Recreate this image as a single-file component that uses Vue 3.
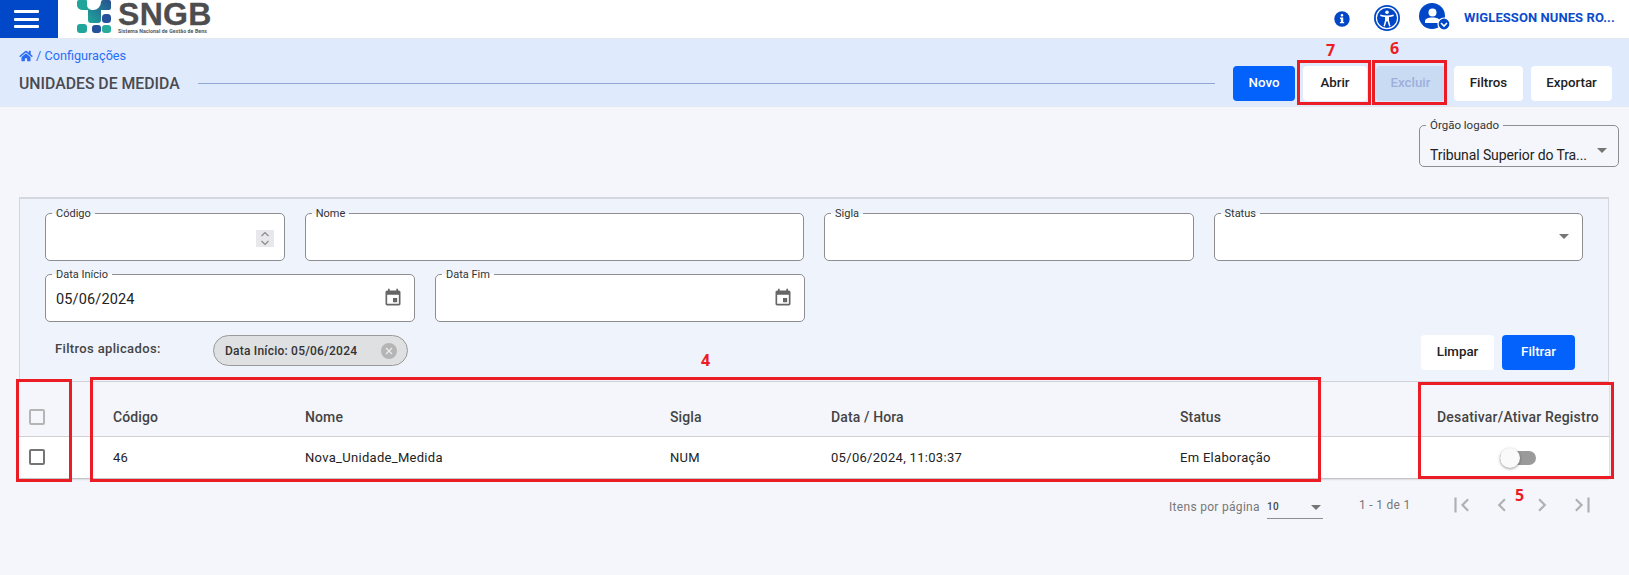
<script setup>
const columns = ['Código', 'Nome', 'Sigla', 'Data / Hora', 'Status']
const cells = ['46', 'Nova_Unidade_Medida', 'NUM', '05/06/2024, 11:03:37', 'Em Elaboração']
const actions = [
  { label: 'Novo', kind: 'primary' },
  { label: 'Abrir', kind: 'plain' },
  { label: 'Excluir', kind: 'disabled' },
  { label: 'Filtros', kind: 'plain' },
  { label: 'Exportar', kind: 'plain' }
]
</script>

<template>
  <div class="page">
    <header class="topbar">
      <button class="menu" aria-label="Menu"><span></span><span></span><span></span></button>
      <div class="logo">
        <svg width="41" height="36" viewBox="0 0 41 36">
          <defs>
            <linearGradient id="lg" x1="0" y1="1" x2="1" y2="0">
              <stop offset="0" stop-color="#1fa79b" />
              <stop offset="1" stop-color="#27508f" />
            </linearGradient>
          </defs>
          <path d="M2 0h7a1 1 0 0 1 1 1v4a5 5 0 0 0 5 5H5a5 5 0 0 1-5-5V2a2 2 0 0 1 2-2z" fill="#1fa59a" />
          <path d="M11 10h5a8 8 0 0 0 8-8 2 2 0 0 1 2-2h6a2 2 0 0 1 2 2v6a2 2 0 0 1-2 2h-8v10a3 3 0 0 1-3 3H14a3 3 0 0 1-3-3z" fill="url(#lg)" />
          <rect x="25" y="14" width="9" height="9" rx="3.500" fill="#25509a" />
          <rect x="0" y="24" width="10" height="9" rx="3" fill="#1fa59a" />
          <rect x="15" y="25" width="9" height="8" rx="3" fill="#25509a" />
          <rect x="25" y="25" width="9" height="8" rx="3" fill="#27ab9c" />
        </svg>
        <div class="logo-text">
          <span class="logo-name">SNGB</span>
          <span class="logo-sub">Sistema Nacional de Gestão de Bens</span>
        </div>
      </div>
      <div class="top-right">
        <svg class="i-info" width="16" height="16" viewBox="0 0 17 17">
          <circle cx="8.500" cy="8.500" r="8.200" fill="#0047c8" />
          <rect x="7.200" y="3.200" width="2.600" height="2.600" rx="1" fill="#fff" />
          <path d="M6.400 7h3.400v4.600h1v1.500H6.300v-1.500h1V8.500h-.9z" fill="#fff" />
        </svg>
        <svg class="i-acc" width="26" height="26" viewBox="0 0 26 26">
          <circle cx="13" cy="13" r="13" fill="#0047c8" />
          <circle cx="13" cy="13" r="10.600" fill="none" stroke="#fff" stroke-width="1.200" />
          <circle cx="13" cy="7.200" r="1.800" fill="#fff" />
          <path d="M6.500 9.600c2 .7 4.200 1 6.500 1s4.500-.3 6.500-1l.4 1.300c-1.600.6-3.200.9-4.900 1.100v3.400l1.500 5.600-1.300.4-1.700-5.200h-1l-1.700 5.200-1.300-.4 1.500-5.600V12c-1.700-.2-3.300-.5-4.900-1.100z" fill="#fff" />
        </svg>
        <svg class="i-user" width="32" height="32" viewBox="0 0 32 32">
          <circle cx="13" cy="13" r="13" fill="#0047c8" />
          <circle cx="13.500" cy="9.500" r="4" fill="#fff" />
          <path d="M6 20v-1.500C6 15.500 9 14.500 13.500 14.500s6 1 7 2.500v3z" fill="#fff" />
          <circle cx="25" cy="21" r="6" fill="#0047c8" stroke="#fff" stroke-width="1.200" />
          <path d="M22 20l3 3 3-3" fill="none" stroke="#fff" stroke-width="1.600" />
        </svg>
        <span class="user-name">WIGLESSON NUNES RO...</span>
      </div>
    </header>

    <section class="crumbbar">
      <div class="crumbs">
        <svg width="14" height="12" viewBox="0 0 576 512">
          <path fill="#2a6df4" d="M280.400 148.300L96 300.100V464a16 16 0 0 0 16 16l112-.3a16 16 0 0 0 15.900-16V368a16 16 0 0 1 16-16h64a16 16 0 0 1 16 16v95.600a16 16 0 0 0 16 16l112 .4a16 16 0 0 0 16-16V300L295.700 148.300a12.200 12.200 0 0 0-15.300 0zM571.600 251.500L488 182.600V44a12 12 0 0 0-12-12h-56a12 12 0 0 0-12 12v72.600L318.500 43a48 48 0 0 0-61 0L4.300 251.500a12 12 0 0 0-1.600 16.900l25.500 31a12 12 0 0 0 16.900 1.600l235.200-193.700a12.200 12.200 0 0 1 15.300 0L530.900 301a12 12 0 0 0 16.900-1.600l25.500-31a12 12 0 0 0-1.700-16.900z" />
        </svg>
        <span>/ Configurações</span>
      </div>
      <div class="titlerow">
        <h1>UNIDADES DE MEDIDA</h1>
        <div class="rule"></div>
        <div class="actions">
          <button v-for="a in actions" :key="a.label" class="btn" :class="a.kind">{{ a.label }}</button>
        </div>
      </div>
    </section>

    <main class="content">
      <div class="orgao-row">
        <div class="field orgao">
          <span class="legend">Órgão logado</span>
          <span class="value">Tribunal Superior do Tra...</span>
          <span class="caret"></span>
        </div>
      </div>

      <section class="filters">
        <div class="row">
          <div class="field w-codigo">
            <span class="legend">Código</span>
            <span class="spin">
              <svg width="18" height="17" viewBox="0 0 18 17">
                <path d="M5.500 6l3.500-3.500L12.500 6M5.500 11L9 14.500 12.500 11" fill="none" stroke="#8a8a8a" stroke-width="1.200" />
              </svg>
            </span>
          </div>
          <div class="field w-nome"><span class="legend">Nome</span></div>
          <div class="field w-sigla"><span class="legend">Sigla</span></div>
          <div class="field w-status">
            <span class="legend">Status</span>
            <span class="caret"></span>
          </div>
        </div>
        <div class="row">
          <div class="field w-date">
            <span class="legend">Data Início</span>
            <span class="value">05/06/2024</span>
            <svg class="cal" width="20" height="20" viewBox="0 0 24 24">
              <path fill="#666" d="M17 12h-5v5h5v-5zM16 1v2H8V1H6v2H5c-1.110 0-1.990.9-1.990 2L3 19c0 1.100.890 2 2 2h14c1.100 0 2-.9 2-2V5c0-1.100-.9-2-2-2h-1V1h-2zm3 18H5V8h14v11z" />
            </svg>
          </div>
          <div class="field w-date">
            <span class="legend">Data Fim</span>
            <svg class="cal" width="20" height="20" viewBox="0 0 24 24">
              <path fill="#666" d="M17 12h-5v5h5v-5zM16 1v2H8V1H6v2H5c-1.110 0-1.990.9-1.990 2L3 19c0 1.100.890 2 2 2h14c1.100 0 2-.9 2-2V5c0-1.100-.9-2-2-2h-1V1h-2zm3 18H5V8h14v11z" />
            </svg>
          </div>
        </div>
        <div class="applied">
          <span class="applied-label">Filtros aplicados:</span>
          <span class="chip">
            Data Início: 05/06/2024
            <span class="chip-x">
              <svg width="8" height="8" viewBox="0 0 8 8"><path d="M1 1l6 6M7 1L1 7" stroke="#eee" stroke-width="1.200" /></svg>
            </span>
          </span>
          <div class="applied-btns">
            <button class="btn plain">Limpar</button>
            <button class="btn primary">Filtrar</button>
          </div>
        </div>
      </section>

      <table class="grid">
        <colgroup>
          <col class="c-check" /><col class="c-cod" /><col class="c-nome" /><col class="c-sigla" />
          <col class="c-data" /><col class="c-status" /><col class="c-toggle" />
        </colgroup>
        <thead>
          <tr>
            <th class="check"><span class="box light"></span></th>
            <th v-for="c in columns" :key="c">{{ c }}</th>
            <th class="center">Desativar/Ativar Registro</th>
          </tr>
        </thead>
        <tbody>
          <tr>
            <td class="check"><span class="box"></span></td>
            <td v-for="c in cells" :key="c">{{ c }}</td>
            <td class="center"><span class="toggle"><span class="knob"></span></span></td>
          </tr>
        </tbody>
      </table>

      <div class="pager">
        <span class="per">Itens por página</span>
        <span class="pagesize">10<span class="caret small"></span></span>
        <span class="range">1 - 1 de 1</span>
        <div class="nav">
          <svg width="26" height="26" viewBox="0 0 24 24"><path fill="#b0b0b0" d="M5 5h2v14H5zM18.400 7.400L17 6l-6 6 6 6 1.400-1.400L13.800 12z" /></svg>
          <svg width="26" height="26" viewBox="0 0 24 24"><path fill="#b0b0b0" d="M15.400 7.400L14 6l-6 6 6 6 1.400-1.400L10.800 12z" /></svg>
          <svg width="26" height="26" viewBox="0 0 24 24"><path fill="#b0b0b0" d="M10 6L8.600 7.400 13.200 12l-4.600 4.600L10 18l6-6z" /></svg>
          <svg width="26" height="26" viewBox="0 0 24 24"><path fill="#b0b0b0" d="M17 5h2v14h-2zM7 6L5.600 7.400 10.200 12l-4.600 4.600L7 18l6-6z" /></svg>
        </div>
      </div>
    </main>

    <div class="mark m-abrir"></div>
    <div class="mark m-excluir"></div>
    <div class="mark m-check"></div>
    <div class="mark m-table"></div>
    <div class="mark m-toggle"></div>
    <span class="num n7">7</span>
    <span class="num n6">6</span>
    <span class="num n4">4</span>
    <span class="num n5">5</span>
  </div>
</template>

<style scoped>
.page {
  position: relative;
  width: 1629px;
  height: 575px;
  overflow: hidden;
  background: #f5f6fb;
  font-family: Roboto, "Liberation Sans", sans-serif;
  color: #333;
}
button { font-family: inherit; border: 0; }

.topbar {
  display: flex;
  align-items: flex-start;
  height: 39px;
  background: #fff;
  box-sizing: border-box;
  border-bottom: 1px solid #e3e7ee;
}
.menu {
  display: flex;
  flex-direction: column;
  justify-content: center;
  gap: 4.500px;
  width: 58px;
  height: 38px;
  padding: 0 19px 0 14px;
  background: #0048c8;
}
.menu span { display: block; height: 3px; background: #fff; border-radius: 1px; }
.logo { display: flex; align-items: flex-start; margin-left: 19px; height: 38px; }
.logo-text { display: flex; flex-direction: column; }
.logo-name {
  font-family: "Liberation Sans", sans-serif;
  font-weight: 700;
  font-size: 32px;
  line-height: 28px;
  letter-spacing: 0.3px;
  color: #4d4d4f;
  -webkit-text-stroke: 0.3px #4d4d4f;
}
.logo-sub { font-size: 5.200px; line-height: 6px; font-weight: 700; color: #555; white-space: nowrap; letter-spacing: .1px; }
.top-right { display: flex; align-items: center; margin-left: auto; height: 38px; padding-right: 18px; }
.i-info { margin-right: 24px; }
.i-acc { margin-right: 19px; margin-top: -2px; }
.i-user { margin-right: 13px; }
.user-name { font-size: 13px; font-weight: 700; color: #0b4bcb; white-space: nowrap; letter-spacing: .08px; width: 147px; margin-top: -3px; }

.crumbbar {
  height: 68px;
  background: #dfeafd;
  box-sizing: border-box;
  border-bottom: 1px solid #e3e7ee;
  padding: 9px 0 0 19px;
}
.crumbs { display: flex; align-items: center; gap: 3px; font-size: 12.700px; line-height: 15px; color: #2a6df4; }
.titlerow { display: flex; align-items: center; margin-top: 3px; height: 35px; }
h1 { margin: 0; font-size: 15.800px; font-weight: 500; color: #4a4a4f; white-space: nowrap; width: 179px; }
.rule { width: 1017px; height: 1px; background: #8fa7d3; }
.actions { display: flex; gap: 8px; margin-left: 18px; }
.actions .btn:nth-child(1) { width: 62px; }
.actions .btn:nth-child(2) { width: 64px; }
.actions .btn:nth-child(3) { width: 69px; margin-left: 1px; }
.actions .btn:nth-child(4) { width: 69px; margin-left: 1px; }
.actions .btn:nth-child(5) { width: 81px; }
.btn {
  height: 35px;
  padding: 0 0 2px;
  border-radius: 4px;
  font-size: 13.300px;
  font-weight: 500;
  box-sizing: border-box;
}
.btn.primary { background: #0262fb; color: #fff; }
.btn.plain { background: #fff; color: #222; }
.btn.disabled { background: #c9daf3; color: #9db0dc; }

.content { padding: 0 0 0 19px; }
.orgao-row { display: flex; justify-content: flex-end; padding: 18px 10px 0 0; height: 90px; box-sizing: border-box; }
.field {
  position: relative;
  box-sizing: border-box;
  height: 48px;
  background: #fff;
  border: 1px solid #8d8d92;
  border-radius: 5px;
}
.orgao { width: 200px; height: 42px; background: #f5f6fb; }
.legend {
  position: absolute;
  top: -7px;
  left: 6px;
  padding: 0 4px;
  font-size: 11px;
  line-height: 13px;
  color: #333;
  background: linear-gradient(#eff3fc 50%, #fff 50%);
  white-space: nowrap;
}
.orgao .legend { background: #f5f6fb; font-size: 11.500px; left: 6px; }
.value {
  position: absolute;
  left: 10px;
  top: 16px;
  font-size: 14.500px;
  line-height: 18px;
  color: #222;
  white-space: nowrap;
  letter-spacing: .15px;
}
.orgao .value { top: 20px; font-size: 14px; letter-spacing: -.1px; }
.caret {
  position: absolute;
  right: 13px;
  top: 20px;
  width: 0;
  height: 0;
  border-left: 5px solid transparent;
  border-right: 5px solid transparent;
  border-top: 5px solid #757575;
}
.orgao .caret { top: 22px; right: 11px; }
.filters {
  height: 185px;
  width: 1590px;
  box-sizing: border-box;
  background: #eff3fc;
  border: 1px solid #d4d7de;
  border-top-width: 2px;
  padding: 14px 25px 0 25px;
}
.row { display: flex; gap: 20px; margin-bottom: 13px; }
.w-codigo { width: 240px; }
.w-nome { width: 500px; }
.w-sigla { width: 370px; }
.w-status { width: 370px; }
.w-date { width: 370px; }
.spin {
  position: absolute;
  right: 10px;
  top: 16px;
  width: 18px;
  height: 17px;
  background: #e8e8ec;
}
.spin svg { display: block; }
.cal { position: absolute; right: 11px; top: 13px; }
.applied { display: flex; align-items: center; height: 35px; margin-top: 5px; }
.applied-label { margin-left: 10px; margin-top: -9px; font-size: 13px; font-weight: 500; color: #444; letter-spacing: .35px; width: 158px; }
.chip {
  display: flex;
  align-items: center;
  box-sizing: border-box;
  width: 195px;
  height: 31px;
  margin-top: -4px;
  padding: 0 10px 0 11px;
  border: 1px solid #9a9a9a;
  border-radius: 16px;
  background: #dfe0e2;
  font-size: 12px;
  font-weight: 500;
  letter-spacing: .22px;
  color: #333;
  white-space: nowrap;
}
.chip-x {
  display: flex;
  align-items: center;
  justify-content: center;
  width: 16px;
  height: 16px;
  margin-left: auto;
  border-radius: 50%;
  background: #b5b5b5;
}
.applied-btns { display: flex; gap: 8px; margin-left: auto; margin-right: 8px; }
.applied-btns .btn { width: 73px; }

.grid {
  width: 1590px;
  table-layout: fixed;
  border-collapse: collapse;
  box-shadow: 0 1px 2px rgba(0, 0, 0, .3);
}
.c-check { width: 75px; }
.c-cod { width: 192px; }
.c-nome { width: 365px; }
.c-sigla { width: 161px; }
.c-data { width: 349px; }
.c-status { width: 266px; }
.c-toggle { width: 182px; }
th, td { padding: 0 0 0 19px; text-align: left; white-space: nowrap; overflow: hidden; }
th { height: 54px; padding-top: 16px; font-size: 14px; font-weight: 500; color: #444; background: #f5f6fb; border-bottom: 1px solid #d2d2d6; letter-spacing: .12px; box-sizing: border-box; }
td { height: 41px; font-size: 13px; color: #222; background: #fff; letter-spacing: .3px; }
.check { padding: 0 0 0 10px; }
th.check { padding-top: 16px; }
.center { padding: 0; text-align: center; }
th.center { padding-top: 16px; letter-spacing: .2px; }
.box { display: block; width: 16px; height: 16px; box-sizing: border-box; border: 2px solid #757575; border-radius: 2px; }
.box.light { border-color: #b5b5b5; }
.toggle { display: inline-block; position: relative; width: 36px; height: 14px; border-radius: 7px; background: #9a9a9a; vertical-align: middle; }
.knob {
  position: absolute;
  left: 0;
  top: -3px;
  width: 20px;
  height: 20px;
  border-radius: 50%;
  background: #fafafa;
  box-shadow: 0 1px 3px rgba(0, 0, 0, .4);
}

.pager { display: flex; align-items: center; height: 58px; font-size: 12px; color: #777; letter-spacing: .3px; }
.per { margin-left: 1150px; width: 98px; font-size: 12px; }
.pagesize {
  position: relative;
  box-sizing: border-box;
  width: 56px;
  height: 22px;
  margin-top: 3px;
  padding-top: 4px;
  border-bottom: 1px solid #8d8d92;
  font-size: 10px;
  font-weight: 500;
  color: #444;
}
.caret.small { right: 2px; top: 8px; }
.range { margin-left: 36px; width: 90px; margin-top: -3px; }
.nav { display: flex; gap: 14px; margin-top: -3px; }
.mark { position: absolute; box-sizing: border-box; border: 3px solid #ec1c24; pointer-events: none; }
.m-abrir { left: 1297px; top: 60px; width: 74px; height: 45px; }
.m-excluir { left: 1372px; top: 60px; width: 75px; height: 45px; }
.m-check { left: 16px; top: 379px; width: 56px; height: 103px; }
.m-table { left: 90px; top: 377px; width: 1231px; height: 105px; }
.m-toggle { left: 1418px; top: 382px; width: 196px; height: 97px; }
.num { position: absolute; font-family: "Open Sans", sans-serif; font-weight: 700; font-size: 16px; line-height: 18px; color: #ec1c24; }
.n7 { left: 1326px; top: 41px; }
.n6 { left: 1390px; top: 39px; }
.n4 { left: 701px; top: 351px; }
.n5 { left: 1515px; top: 486px; }
</style>

<style>
html, body { margin: 0; padding: 0; background: #f5f6fb; }
</style>
